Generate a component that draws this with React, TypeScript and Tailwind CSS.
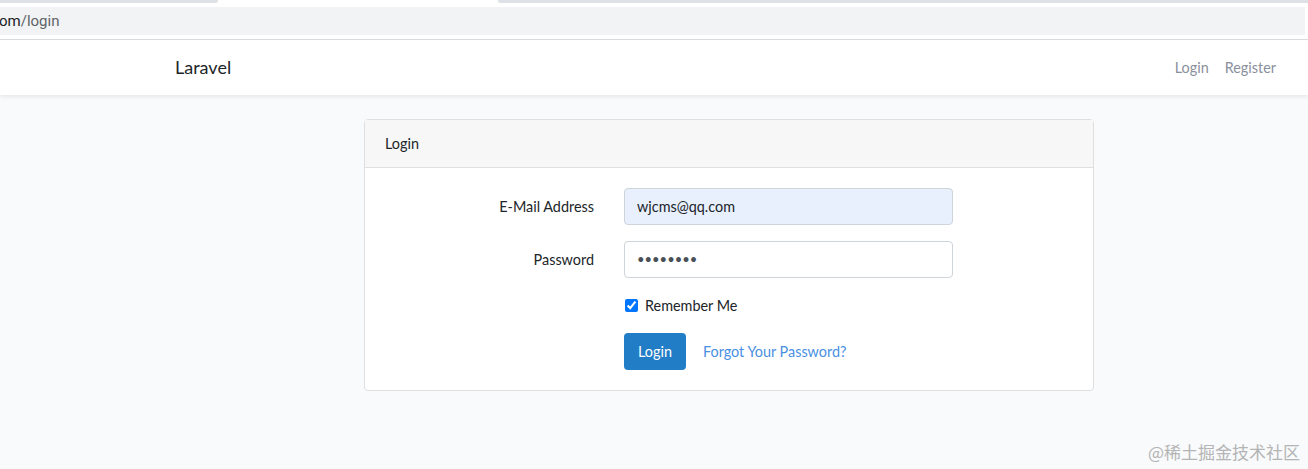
import { useState } from "react";

const font = "font-['Lato','Noto_Sans',sans-serif]";

const App = () => {
    const [remember, setRemember] = useState(true);

    return (
        <div className={`relative h-[469px] w-[1308px] overflow-hidden bg-[#f8fafc] ${font} text-[14.4px] text-[#212529]`}>
            {/* browser chrome */}
            <div className="flex h-[3px] w-full">
                <div className="w-[218px] rounded-br-[6px] bg-[#dee1e6]" />
                <div className="w-[280px] bg-white" />
                <div className="flex-1 rounded-bl-[6px] bg-[#dee1e6]" />
            </div>
            <div className="bg-white pt-[4px] pb-[4px]">
                <div className="mr-[3px] flex h-[28px] items-center bg-[#f1f3f4] font-['Roboto',sans-serif] text-[15px]">
                    <span className="-ml-[1px] text-[#202124]">om</span>
                    <span className="text-[#5f6368]">/login</span>
                </div>
            </div>
            <div className="h-px bg-[#dadce0]" />

            {/* navbar */}
            <nav className="relative z-10 flex h-[55px] items-center justify-between bg-white pl-[175px] pr-[32px] shadow-[0_2px_4px_rgba(0,0,0,0.075)]">
                <span className="text-[18px] text-[#212529]">Laravel</span>
                <div className="flex gap-[16px] text-[14.4px] text-[#8a909c]">
                    <a>Login</a>
                    <a>Register</a>
                </div>
            </nav>

            {/* card */}
            <div className="ml-[364px] mt-[24px] w-[730px] rounded-[4px] border border-[#dfdfdf] bg-white">
                <div className="border-b border-[#dfdfdf] bg-[#f7f7f7] px-[20px] py-[12px] leading-[23px]">
                    Login
                </div>
                <div className="flex flex-col gap-[16px] p-[20px]">
                    <div className="flex items-center gap-[30px]">
                        <label className="w-[209px] text-right">E-Mail Address</label>
                        <div className="flex h-[37px] w-[329px] items-center rounded-[4px] border border-[#ced4da] bg-[#e8f0fe] px-[12px] text-[#212529]">
                            wjcms@qq.com
                        </div>
                    </div>
                    <div className="flex items-center gap-[30px]">
                        <label className="w-[209px] text-right">Password</label>
                        <div className="flex h-[37px] w-[329px] items-center rounded-[4px] border border-[#ced4da] bg-white px-[12px] text-[#495057]">
                            <span className="text-[13px] tracking-[0px]">••••••••</span>
                        </div>
                    </div>
                    <div className="flex h-[23px] items-center gap-[7px] pl-[240px]">
                        <input
                            type="checkbox"
                            checked={remember}
                            onChange={() => setRemember(!remember)}
                            className="m-0 h-[13px] w-[13px] accent-[#0075ff]"
                        />
                        <span>Remember Me</span>
                    </div>
                    <div className="flex items-center gap-[17px] pl-[239px]">
                        <button className="h-[37px] rounded-[4px] bg-[#227dc7] px-[14px] text-white">
                            Login
                        </button>
                        <a className="text-[#4a90e2]">Forgot Your Password?</a>
                    </div>
                </div>
            </div>

            <span className="absolute right-[8px] bottom-[5px] font-['Noto_Sans_CJK_SC',sans-serif] text-[17px] text-[#b4b4b4]">
                @稀土掘金技术社区
            </span>
        </div>
    );
};

export default App;
